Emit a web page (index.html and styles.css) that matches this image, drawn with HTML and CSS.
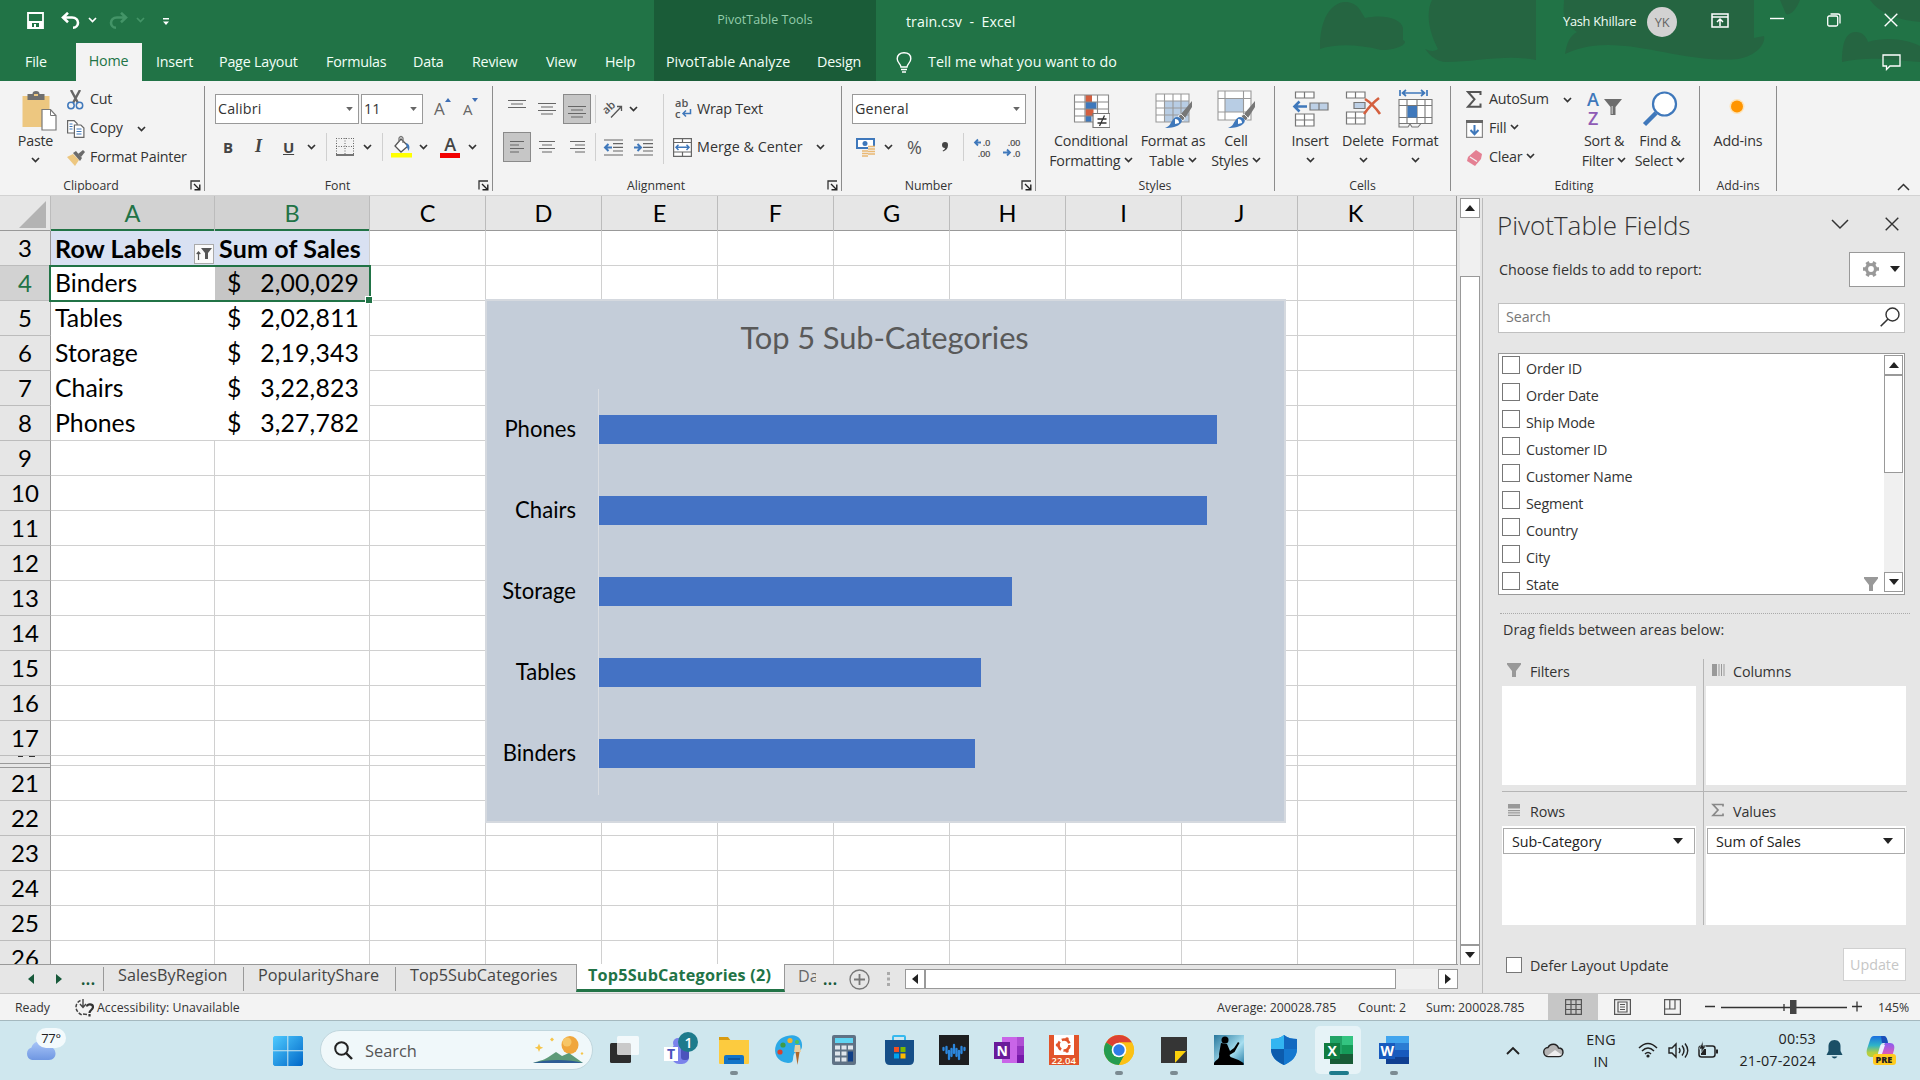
FILE: index.html
```html
<!DOCTYPE html>
<html lang="en">
<head>
<meta charset="utf-8">
<title>train.csv - Excel</title>
<link rel="stylesheet" href="styles.css">
</head>
<body>
<svg class="defs" aria-hidden="true">
  <symbol id="chev" viewBox="0 0 9 6"><path d="M1 1l3.5 3.5L8 1" fill="none" stroke="currentColor" stroke-width="1.7"/></symbol>
  <symbol id="tri" viewBox="0 0 10 6"><path d="M0 0h10L5 6z" fill="currentColor"/></symbol>
  <symbol id="launch" viewBox="0 0 11 11"><path d="M1 9.500V1h9" fill="none" stroke="#333" stroke-width="1.300"/><path d="M4 4l5.500 5.500M9.800 4.500v5.300H4.500" fill="none" stroke="#222" stroke-width="1.400"/></symbol>
  <symbol id="funnel" viewBox="0 0 14 14"><path d="M0 0h14v1.500L9 8v6H5V8L0 1.500z" fill="currentColor"/></symbol>
</svg>

<header class="titlebar">
  <svg class="art" viewBox="0 0 640 81"><g fill="#256541">
    <path d="M40 47C40 20 50 3 65 2c13 0 16 10 20 16 18-4 36 0 38 10v12c6 2-2 10-22 10-25-6-45-6-61-1z"/>
    <path d="M152 0h104v60c-30-6-60 2-90 2-8 0-15-5-21-13 6 3 11 2 13 0C148 30 146 12 152 0z"/>
    <path d="M284 0h190v38l10-2c2 8-8 20-26 23-45 4-90-14-130-14-20 0-32 4-43 9 2-12 5-18 12-22C280 20 284 10 284 0z"/>
    <path d="M562 62c0-20 4-30 14-30 6 0 10 4 12 10 20-6 40-2 52 4v16c-30-2-50-6-78 0zM500 0h20c-4 10-10 16-14 14zM590 0h50v22c-22-2-40-8-50-22z"/></g></svg>
  <div class="quick">
    <svg width="17" height="17" viewBox="0 0 17 17"><path d="M1 1h15v15H1z" fill="none" stroke="#fff" stroke-width="1.800"/><path d="M1 9h15v7H1z" fill="#fff"/><path d="M5 11h7v4H9v-3H7v3H5z" fill="#217346"/></svg>
    <svg width="19" height="17" viewBox="0 0 19 17"><path d="M7 .8L2 5.500l5 4.700M2.500 5.500H11c4 0 6 2.500 6 5.200s-2 5-5 5" fill="none" stroke="#fff" stroke-width="2.600"/></svg>
    <svg class="chev white" width="9" height="6"><use href="#chev"/></svg>
    <svg width="19" height="17" viewBox="0 0 19 17"><path d="M12 .8l5 4.700-5 4.700M16.500 5.500H8c-4 0-6 2.500-6 5.200s2 5 5 5" fill="none" stroke="#439467" stroke-width="2.600"/></svg>
    <svg class="chev dimgreen" width="9" height="6"><use href="#chev"/></svg>
    <svg class="custom" width="7" height="8" viewBox="0 0 7 8"><path d="M0 0h6v1.400H0zM0 3.500h6L3 7z" fill="#fff"/></svg>
    <span class="tools">PivotTable Tools</span>
    <span class="doc">train.csv&nbsp; -&nbsp; Excel</span>
    <span class="user">Yash Khillare</span>
    <span class="avatar">YK</span>
    <svg width="18" height="15" viewBox="0 0 18 15"><path d="M1 1h16v13H1zM1 4h16M9 13V6.500M6 9l3-3 3 3" fill="none" stroke="#fff" stroke-width="1.500"/></svg>
    <svg class="min" width="14" height="4" viewBox="0 0 14 4"><path d="M0 1.500h14" stroke="#fff" stroke-width="1.400"/></svg>
    <svg width="14" height="14" viewBox="0 0 14 14"><rect x=".7" y="3" width="10" height="10" rx="1.500" fill="none" stroke="#fff" stroke-width="1.300"/><path d="M3.500 1H11q2 0 2 2v7.500" fill="none" stroke="#fff" stroke-width="1.300"/></svg>
    <svg width="14" height="14" viewBox="0 0 14 14"><path d="M.7.7l12.600 12.600M13.300.7L.7 13.300" stroke="#fff" stroke-width="1.400"/></svg>
  </div>
  <nav class="tabs">
    <span>File</span><span class="home">Home</span><span>Insert</span><span>Page Layout</span><span>Formulas</span><span>Data</span><span>Review</span><span>View</span><span>Help</span><span class="ctx">PivotTable Analyze</span><span>Design</span>
    <svg width="16" height="21" viewBox="0 0 16 21"><path d="M5 15c0-3-3.800-4-3.800-8.200C1.200 3 4 .8 8 .8s6.800 2.200 6.800 6C14.800 11 11 12 11 15zM5 17.500h6M6 20h4" fill="none" stroke="#fff" stroke-width="1.400"/></svg>
    <span class="tell">Tell me what you want to do</span>
    <svg width="19" height="17" viewBox="0 0 19 17"><path d="M1 1h17v11H8l-3.500 3.500V12H1z" fill="none" stroke="#fff" stroke-width="1.300"/></svg>
  </nav>
</header>

<section class="ribbon">
  <div class="group g-clip">
    <div class="gbody split">
      <div class="big paste"><svg width="36" height="42" viewBox="-1.500 0 36 42"><path d="M0 7h27v31H0z" fill="#edc780"/><path d="M5 11V5h5q0-3 3.500-3T17 5h5v6z" fill="#6f6f6f"/><path d="M11.500 5h4v2h-4z" fill="#edc780"/><path d="M19.500 20.500h8.500l5.500 6V41h-14z" fill="#fff" stroke="#777" stroke-width="1.200"/><path d="M28 20.500v6h5.500" fill="none" stroke="#777"/></svg><span>Paste</span><svg class="chev" width="9" height="6"><use href="#chev"/></svg></div>
      <div class="small-col">
        <div class="sm"><svg width="17" height="20" viewBox="0 0 17 20"><path d="M4 0l7 13M13 0L6 13" stroke="#666" stroke-width="2.400"/><circle cx="4" cy="15.500" r="3.200" fill="none" stroke="#3f78bb" stroke-width="1.500"/><circle cx="12.500" cy="15.500" r="3.200" fill="none" stroke="#3f78bb" stroke-width="1.500"/></svg><span>Cut</span></div>
        <div class="sm copy"><svg width="18" height="18" viewBox="0 0 18 18"><g fill="#fff" stroke="#666" stroke-width="1.200"><path d="M.6.6h6.500l3 3V13H.6z"/><path d="M7.400 5h6.500l3 3v9.400H7.400z"/></g><path d="M2.500 4h3M2.500 6.500h3M2.500 9h3M9.500 9h5M9.500 11.500h5M9.500 14h5" stroke="#3f78bb" stroke-width="1.200"/></svg><span>Copy</span><svg class="chev" width="9" height="6"><use href="#chev"/></svg></div>
        <div class="sm"><svg width="19" height="16" viewBox="0 0 19 16"><path d="M0 7l6-3 6 6-4 6z" fill="#edc780"/><path d="M6 3l3-2 6 7-2 3z" fill="#6b6b6b"/><path d="M11 4l5-4 2 2-4 5z" fill="#6b6b6b"/></svg><span>Format Painter</span></div>
      </div>
    </div>
    <div class="glabel"><span>Clipboard</span><svg width="11" height="11"><use href="#launch"/></svg></div>
  </div>

  <div class="group g-font">
    <div class="gbody rows">
      <div class="r1"><div class="combo w145"><span>Calibri</span><svg class="tri" width="7" height="4"><use href="#tri"/></svg></div><div class="combo w63"><span>11</span><svg class="tri" width="7" height="4"><use href="#tri"/></svg></div>
        <div class="grow"><span>A</span><svg width="6" height="4" viewBox="0 0 6 4"><path d="M0 4l3-4 3 4z" fill="#3f6fb5"/></svg></div>
        <div class="grow"><span class="less">A</span><svg width="6" height="4" viewBox="0 0 6 4"><path d="M0 0l3 4 3-4z" fill="#3f6fb5"/></svg></div></div>
      <div class="r2"><b>B</b><i>I</i><u>U</u><svg class="chev" width="9" height="6"><use href="#chev"/></svg><em class="sep"></em>
        <svg width="18" height="18" viewBox="0 0 18 18"><path d="M.5 0v17M17.500 0v17M0 .5h18M9 0v17M0 8.500h18" stroke="#666" stroke-dasharray="1 1.500"/><path d="M0 17h18" stroke="#555" stroke-width="1.600"/></svg>
        <svg class="chev" width="9" height="6"><use href="#chev"/></svg><em class="sep"></em>
        <svg width="21" height="22" viewBox="0 0 21 22"><path d="M10 3l7 7-7 6-6-6z" fill="#fff" stroke="#555" stroke-width="1.300"/><path d="M8 6V2q2-3 4 0v5" fill="none" stroke="#777" stroke-width="1.300"/><path d="M15 7c4 1 4 5 2.500 8-1-3-2-4-2.500-8z" fill="#3f78bb"/><path d="M0 17h21v4.500H0z" fill="#ff0"/></svg>
        <svg class="chev" width="9" height="6"><use href="#chev"/></svg>
        <span class="fontcolor">A</span>
        <svg class="chev" width="9" height="6"><use href="#chev"/></svg></div>
    </div>
    <div class="glabel"><span>Font</span><svg width="11" height="11"><use href="#launch"/></svg></div>
  </div>

  <div class="group g-align">
    <div class="gbody rows">
      <div class="r1"><svg class="topal" width="18" height="12" viewBox="0 0 18 12"><path d="M0 .5h18M3 4h12M0 7.500h18" class="ln"/></svg>
        <svg width="18" height="12" viewBox="0 0 18 12"><path d="M0 .5h18M3 4h12M0 7.500h18M3 11h12" class="ln"/></svg>
        <span class="sel"><svg width="18" height="20" viewBox="0 0 18 20"><path d="M0 7.500h18M3 11h12M0 14.500h18M3 18h12" class="ln"/></svg></span>
        <em class="sep"></em>
        <svg width="19" height="18" viewBox="0 0 19 18"><text x="0" y="11" transform="rotate(-42 6 10)" class="ab">ab</text><path d="M7 17.500L17 7M17.500 11V6.500H13" fill="none" stroke="#555" stroke-width="1.300"/></svg>
        <svg class="chev" width="9" height="6"><use href="#chev"/></svg><em class="sep tall"></em>
        <svg width="17" height="20" viewBox="0 0 17 20"><text x="0" y="8" class="ab">ab</text><text x="0" y="18.500" class="ab">c</text><path d="M15.500 10v4.500H8.500M11 11.500l-3 3 3 3" fill="none" stroke="#3f78bb" stroke-width="1.500"/></svg>
        <span>Wrap Text</span></div>
      <div class="r2"><span class="sel"><svg width="14" height="12" viewBox="0 0 14 12"><path d="M0 .5h14M0 4h9M0 7.500h14M0 11h9" class="ln"/></svg></span>
        <svg width="16" height="12" viewBox="0 0 16 12"><path d="M0 .5h16M3 4h10M0 7.500h16M3 11h10" class="ln"/></svg>
        <svg width="15" height="12" viewBox="0 0 15 12"><path d="M0 .5h15M5 4h10M0 7.500h15M5 11h10" class="ln"/></svg>
        <em class="sep"></em>
        <svg width="19" height="17" viewBox="0 0 19 17"><path d="M0 1h19M9 4.700h10M9 8.400h10M9 12h10M0 16h19" class="ln"/><path d="M8 8.500H1.500M4.500 5L1 8.500 4.500 12" fill="none" stroke="#3f78bb" stroke-width="2"/></svg>
        <svg width="19" height="17" viewBox="0 0 19 17"><path d="M0 1h19M9 4.700h10M9 8.400h10M9 12h10M0 16h19" class="ln"/><path d="M0 8.500h6.500M3.500 5L7 8.500 3.500 12" fill="none" stroke="#3f78bb" stroke-width="2"/></svg>
        <em></em>
        <svg width="19" height="19" viewBox="0 0 19 19"><path d="M.6.6h17.800v17.800H.6zM0 4.500h19M0 14h19M9.500 0v4.500M9.500 14v5" fill="#fff" stroke="#666" stroke-width="1.200"/><path d="M3 9.300h13M5.500 6.700L3 9.300l2.500 2.600M13.500 6.700L16 9.300l-2.500 2.600" fill="none" stroke="#3f78bb" stroke-width="1.500"/></svg>
        <span class="merge">Merge &amp; Center</span><svg class="chev" width="9" height="6"><use href="#chev"/></svg></div>
    </div>
    <div class="glabel"><span>Alignment</span><svg width="11" height="11"><use href="#launch"/></svg></div>
  </div>

  <div class="group g-num">
    <div class="gbody rows">
      <div class="r1"><div class="combo w175"><span>General</span><svg class="tri" width="7" height="4"><use href="#tri"/></svg></div></div>
      <div class="r2"><svg width="20" height="19" viewBox="0 0 20 19"><path d="M0 0h19v11H0z" fill="#3f78bb"/><path d="M2 2h15v7H2z" fill="#fff"/><path d="M1 1h17v9H1z" fill="none" stroke="#3f78bb" stroke-width="2"/><circle cx="9" cy="5.500" r="2.500" fill="#3f78bb"/><path d="M12 8h7v9h-7z" fill="#f3f3f3"/><path d="M12 8.500h7M12 11h7M12 13.500h7M12 16h7M6 13h6M6 15.500h6M6 18h6" stroke="#e9b873" stroke-width="1.700"/></svg>
        <svg class="chev" width="9" height="6"><use href="#chev"/></svg><span class="pct">%</span>
        <svg width="8" height="10" viewBox="0 0 8 10"><path d="M4 0a3 3 0 013 3.200C7 6.500 5 8.500 2 9.500L1.700 8.500C3.500 7.700 4 6.800 4 6A3 3 0 014 0z" fill="#444"/></svg>
        <em class="sep"></em>
        <svg width="18" height="21" viewBox="0 -1 18 21"><text x="16" y="8" class="dec" text-anchor="end">.0</text><text x="16" y="18.500" class="dec" text-anchor="end">.00</text><path d="M7 4.500H1.200M4 1.500l-3 3 3 3" fill="none" stroke="#3f78bb" stroke-width="1.800"/></svg>
        <svg width="18" height="21" viewBox="0 -1 18 21"><text x="17" y="8" class="dec" text-anchor="end">.00</text><text x="17" y="18.500" class="dec" text-anchor="end">.0</text><path d="M0 14.500h6.500M4 11.500l3 3-3 3" fill="none" stroke="#3f78bb" stroke-width="1.800"/></svg></div>
    </div>
    <div class="glabel"><span>Number</span><svg width="11" height="11"><use href="#launch"/></svg></div>
  </div>

  <div class="group g-styles">
    <div class="gbody bigs">
      <div class="big"><svg width="38" height="42" viewBox="-1.500 0 38 42"><path d="M1 6h34v27H1z" fill="#fff"/><path d="M12 6h6.500v7H12zM12 20h8v7h-8z" fill="#d35f40"/><path d="M12 13h11v7H12zM12 27h6v6h-6z" fill="#3f78bb"/><path d="M1 6h34v27H1zM1 13h34M1 20h34M1 27h34M11.500 6v27M24 6v27" fill="none" stroke="#888" stroke-width="1.100"/><path d="M19.500 24.500h17v14h-17z" fill="#fff" stroke="#777" stroke-width="1.200"/><path d="M24 30h9M24 34h9M31 26.500l-5 10.500" stroke="#333" stroke-width="1.300"/></svg><span>Conditional</span><span>Formatting <svg class="chev" width="9" height="6"><use href="#chev"/></svg></span></div>
      <div class="big"><svg width="38" height="42" viewBox="-1 0 38 42"><path d="M1 5h33v28H1z" fill="#fff"/><path d="M9.500 12H34v21H9.500z" fill="#b8cde4"/><path d="M1 5h33v28H1zM1 12h33M1 19h33M1 26h33M9.500 5v28M18 5v28M26 5v28" fill="none" stroke="#999" stroke-width="1.100"/><path d="M37 12v6l-7 11-4-4z" fill="#777"/><path d="M26 25l4 4-2 3-5-5z" fill="#777" stroke="#fff" stroke-width=".8"/><path d="M22 28c4 0 6 3 4 6-3 4-10 5-16 5 5-2 5-4 7-7 1-2 3-4 5-4z" fill="#3f78bb"/><path d="M20 30q4 0 4 4l-4 1z" fill="#fff"/></svg><span>Format as</span><span>Table <svg class="chev" width="9" height="6"><use href="#chev"/></svg></span></div>
      <div class="big"><svg width="38" height="42" viewBox="0 0 38 42"><path d="M1 2h33v29H1z" fill="#fff"/><path d="M8 9.500h18.500V23H8z" fill="#b8cde4"/><path d="M1 2h33v29H1zM1 9.500h33M1 23h33M8 2v29M26.500 2v29" fill="none" stroke="#999" stroke-width="1.100"/><path d="M38 12v6l-7 11-4-4z" fill="#777"/><path d="M27 25l4 4-2 3-5-5z" fill="#777" stroke="#fff" stroke-width=".8"/><path d="M23 28c4 0 6 3 4 6-3 4-10 5-16 5 5-2 5-4 7-7 1-2 3-4 5-4z" fill="#3f78bb"/><path d="M21 30q4 0 4 4l-4 1z" fill="#fff"/></svg><span>Cell</span><span>Styles <svg class="chev" width="9" height="6"><use href="#chev"/></svg></span></div>
    </div>
    <div class="glabel"><span>Styles</span></div>
  </div>

  <div class="group g-cells">
    <div class="gbody bigs">
      <div class="big"><svg width="37" height="42" viewBox="0 0 37 42"><g fill="#fff" stroke="#777" stroke-width="1.200"><path d="M3.500 3H22v6H3.500zM12.500 3v6M3.500 25H22v12H3.500zM3.500 31H22M12.500 25v12"/></g><path d="M18 14h18v7H18zM27 14v7" fill="#bdd0e6" stroke="#777" stroke-width="1.200"/><path d="M15 17.500H3M7.500 12.500l-5 5 5 5" fill="none" stroke="#3f78bb" stroke-width="2.600"/></svg><span>Insert</span><svg class="chev" width="9" height="6"><use href="#chev"/></svg></div>
      <div class="big"><svg width="37" height="42" viewBox="0 0 37 42"><g fill="#fff" stroke="#777" stroke-width="1.200"><path d="M1.500 3H20v6H1.500zM10.500 3v6M1.500 23H20v12H1.500zM1.500 29H20M10.500 23v12"/></g><path d="M9 13.500h11v6H9z" fill="#bdd0e6" stroke="#777" stroke-width="1.200"/><path d="M20 10q8 5 15 15M34 9q-8 6-15 16" fill="none" stroke="#d4603f" stroke-width="2.600"/></svg><span>Delete</span><svg class="chev" width="9" height="6"><use href="#chev"/></svg></div>
      <div class="big"><svg width="37" height="42" viewBox="0 0 37 42"><path d="M3 1v6M30 1v6M5 4h23M9 1L5.500 4 9 7M24 1l3.500 3L24 7" fill="none" stroke="#3f78bb" stroke-width="1.700"/><path d="M2 10.500h33v24H2z" fill="#fff"/><path d="M2 10.500h33v24H2zM2 16.500h33M2 28.500h33M10 10.500v24M20 10.500v24M28 10.500v24M2 34.500v3.500h9l2-3 2 3h6l3-3.500" fill="none" stroke="#777" stroke-width="1.100"/><path d="M10.500 17H20v11.500h-9.500z" fill="#3f78bb"/></svg><span>Format</span><svg class="chev" width="9" height="6"><use href="#chev"/></svg></div>
    </div>
    <div class="glabel"><span>Cells</span></div>
  </div>

  <div class="group g-edit">
    <div class="gbody bigs">
      <div class="small-col">
        <div class="sm sum"><svg width="16" height="17" viewBox="0 0 16 17"><path d="M14.500 4V1H2l6.500 7.300L2 15.800h12.500v-3.300" fill="none" stroke="#555" stroke-width="2"/></svg><span>AutoSum</span><svg class="chev" width="9" height="6"><use href="#chev"/></svg></div>
        <div class="sm"><svg width="17" height="18" viewBox="0 0 17 18"><path d="M.6.6h15.800v16.800H.6z" fill="#fff" stroke="#888" stroke-width="1.200"/><path d="M0 0h17v3H0z" fill="#666"/><path d="M8.500 5v9M4.500 10l4 4.200 4-4.200" fill="none" stroke="#3f78bb" stroke-width="2"/></svg><span>Fill <svg class="chev" width="9" height="6"><use href="#chev"/></svg></span></div>
        <div class="sm"><svg width="17" height="16" viewBox="0 0 17 16"><path d="M10 0l6 4-1 5-6 7-8-5 1-4z" fill="#e48093"/><path d="M4 7l7 4.500" stroke="#f3f3f3" stroke-width="1.300"/></svg><span>Clear <svg class="chev" width="9" height="6"><use href="#chev"/></svg></span></div>
      </div>
      <div class="big"><svg class="sort" width="36" height="42" viewBox="-1 0 36 42"><text x="0" y="16.500" class="az a">A</text><text x="1" y="36" class="az z">Z</text><path d="M17 10h18l-6.500 8v8h-5v-8z" fill="#6d6d6d"/><path d="M25.200 17v8" stroke="#bbb" stroke-width="1.400"/></svg><span>Sort &amp;</span><span>Filter <svg class="chev" width="9" height="6"><use href="#chev"/></svg></span></div>
      <div class="big"><svg width="36" height="42" viewBox="0 0 36 42"><circle cx="22.500" cy="15" r="11.500" fill="#fff" stroke="#3f78bb" stroke-width="2.200"/><path d="M14 24L2.500 35.500" stroke="#3f78bb" stroke-width="4.500"/></svg><span>Find &amp;</span><span>Select <svg class="chev" width="9" height="6"><use href="#chev"/></svg></span></div>
    </div>
    <div class="glabel"><span>Editing</span></div>
  </div>

  <div class="group g-add">
    <div class="gbody bigs"><div class="big"><svg width="36" height="42" viewBox="0 0 36 42"><circle cx="17" cy="17.500" r="7.500" fill="#fde3b8"/><circle cx="17" cy="17.500" r="6" fill="#ff9500"/></svg><span>Add-ins</span></div></div>
    <div class="glabel"><span>Add-ins</span></div>
  </div>
  <div class="fold"><svg width="13" height="8" viewBox="0 0 13 8"><path d="M1 7l5.500-5.500L12 7" fill="none" stroke="#333" stroke-width="1.500"/></svg></div>
</section>

<main class="work">
  <div class="book">
    <div class="view">
      <div class="sheet">
        <div class="cols"><span class="corner"><svg width="28" height="28" viewBox="0 0 28 28"><path d="M27 0v27H0z" fill="#b3b3b3"/></svg></span><span class="on">A</span><span class="on">B</span><span>C</span><span>D</span><span>E</span><span>F</span><span>G</span><span>H</span><span>I</span><span>J</span><span>K</span><span></span></div>
        <div class="cells">
          <div class="row head"><b>3</b><span>Row Labels<i class="filter"><svg width="16" height="14" viewBox="0 0 16 14"><path d="M2.500 13V5M.7 7l1.800-2 1.800 2" fill="none" stroke="#555" stroke-width="1.200"/><path d="M5 1h11l-4 5v6H9V6z" fill="#555"/></svg></i></span><span>Sum of Sales</span></div>
          <div class="row on"><b>4</b><span>Binders</span><span class="num"><s>$</s>2,00,029</span></div>
          <div class="row"><b>5</b><span>Tables</span><span class="num"><s>$</s>2,02,811</span></div>
          <div class="row"><b>6</b><span>Storage</span><span class="num"><s>$</s>2,19,343</span></div>
          <div class="row"><b>7</b><span>Chairs</span><span class="num"><s>$</s>3,22,823</span></div>
          <div class="row last"><b>8</b><span>Phones</span><span class="num"><s>$</s>3,27,782</span></div>
          <div class="row"><b>9</b></div><div class="row"><b>10</b></div><div class="row"><b>11</b></div><div class="row"><b>12</b></div><div class="row"><b>13</b></div><div class="row"><b>14</b></div><div class="row"><b>15</b></div><div class="row"><b>16</b></div><div class="row"><b>17</b></div>
          <div class="row sliver"><b><i></i></b></div>
          <div class="row"><b>21</b></div><div class="row"><b>22</b></div><div class="row"><b>23</b></div><div class="row"><b>24</b></div><div class="row"><b>25</b></div><div class="row"><b>26</b></div>
          <div class="selection"><i></i></div>
          <figure class="chart">
            <figcaption>Top 5 Sub-Categories</figcaption>
            <div class="plot">
              <span>Phones</span><div><i style="width:618px"></i></div>
              <span>Chairs</span><div><i style="width:608px"></i></div>
              <span>Storage</span><div><i style="width:413px"></i></div>
              <span>Tables</span><div><i style="width:382px"></i></div>
              <span>Binders</span><div><i style="width:376px"></i></div>
            </div>
          </figure>
        </div>
      </div>
      <div class="vscroll"><span class="btn"><svg class="up" width="10" height="6"><use href="#tri"/></svg></span><span class="track"></span><span class="thumb"></span><span class="btn"><svg width="10" height="6"><use href="#tri"/></svg></span></div>
    </div>
    <div class="sheets">
      <svg width="6" height="10" viewBox="0 0 6 10"><path d="M6 0v10L0 5z" fill="#17593a"/></svg>
      <svg width="6" height="10" viewBox="0 0 6 10"><path d="M0 0v10l6-5z" fill="#17593a"/></svg>
      <span class="dots">...</span>
      <span class="st">SalesByRegion</span><span class="st">PopularityShare</span><span class="st">Top5SubCategories</span><span class="st active">Top5SubCategories (2)</span><span class="cut">Da</span><span class="dots">...</span>
      <svg width="21" height="21" viewBox="0 0 21 21"><circle cx="10.500" cy="10.500" r="9.500" fill="none" stroke="#777" stroke-width="1.300"/><path d="M10.500 5v11M5 10.500h11" stroke="#777" stroke-width="1.800"/></svg>
      <svg width="3" height="14" viewBox="0 0 3 14"><path d="M0 0h3v3H0zM0 5.500h3v3H0zM0 11h3v3H0z" fill="#aaa"/></svg>
      <div class="hscroll"><span class="btn"><svg width="6" height="10" viewBox="0 0 6 10"><path d="M6 0v10L0 5z" fill="#222"/></svg></span><span class="thumb"></span><span class="track"></span><span class="btn"><svg width="6" height="10" viewBox="0 0 6 10"><path d="M0 0v10l6-5z" fill="#222"/></svg></span></div>
    </div>
  </div>

  <aside class="pane">
    <div class="ptitle"><h2>PivotTable Fields</h2><svg width="18" height="11" viewBox="0 0 18 11"><path d="M1 1l8 8 8-8" fill="none" stroke="#333" stroke-width="1.500"/></svg><svg width="14" height="14" viewBox="0 0 14 14"><path d="M.7.7l12.600 12.600M13.300.7L.7 13.300" stroke="#333" stroke-width="1.400"/></svg></div>
    <div class="choose"><span>Choose fields to add to report:</span><div class="gear"><svg width="16" height="16" viewBox="0 0 16 16"><circle cx="8" cy="8" r="4.500" fill="none" stroke="#999" stroke-width="3.200"/><path d="M4 1l1.500 2.600M12 1l-1.500 2.600M4 15l1.500-2.600M12 15l-1.500-2.600M0 8h3M13 8h3" stroke="#999" stroke-width="3.600"/></svg><svg width="10" height="6"><use href="#tri"/></svg></div></div>
    <div class="search"><span>Search</span><svg width="20" height="20" viewBox="0 0 20 20"><circle cx="12.500" cy="7.500" r="6.500" fill="none" stroke="#333" stroke-width="1.400"/><path d="M8 12L.7 19.300" stroke="#333" stroke-width="1.600"/></svg></div>
    <div class="list">
      <ul><li>Order ID</li><li>Order Date</li><li>Ship Mode</li><li>Customer ID</li><li>Customer Name</li><li>Segment</li><li>Country</li><li>City</li><li>State<svg width="14" height="14"><use href="#funnel"/></svg></li></ul>
      <div class="lscroll"><span class="btn"><svg class="up" width="10" height="6"><use href="#tri"/></svg></span><span class="thumb"></span><span class="track"></span><span class="btn"><svg width="10" height="6"><use href="#tri"/></svg></span></div>
    </div>
    <p class="drag">Drag fields between areas below:</p>
    <div class="areas">
      <section><h3><svg width="14" height="14"><use href="#funnel"/></svg>Filters</h3><div class="drop"></div></section>
      <section><h3><svg width="14" height="12" viewBox="0 0 14 12"><path d="M1 0h5v12H1zM7.500 0h1v12h-1zM10 0h1v12h-1zM12.500 0h1v12h-1z" fill="#999"/></svg>Columns</h3><div class="drop"></div></section>
      <section><h3><svg width="14" height="12" viewBox="0 0 14 12"><path d="M1 0h12v4.500H1zM1 6h12v1.200H1zM1 8.300h12v1.200H1zM1 10.700h12v1.200H1z" fill="#999"/></svg>Rows</h3><div class="drop"><div class="field">Sub-Category<svg width="10" height="6"><use href="#tri"/></svg></div></div></section>
      <section><h3><svg width="14" height="14" viewBox="0 0 14 14"><path d="M12 3.500V1.500H2L7 7l-5 5.500h10v-2" fill="none" stroke="#888" stroke-width="1.700"/></svg>Values</h3><div class="drop"><div class="field">Sum of Sales<svg width="10" height="6"><use href="#tri"/></svg></div></div></section>
    </div>
    <div class="defer"><i></i><span>Defer Layout Update</span><button>Update</button></div>
  </aside>
</main>

<div class="status">
  <span>Ready</span>
  <svg width="19" height="19" viewBox="0 0 19 19"><path d="M5.500 2.500A7 7 0 001 9c0 3.500 2.500 6.500 6 8" fill="none" stroke="#444" stroke-width="1.500" stroke-dasharray="3.500 1.500"/><path d="M8 1v8M5 6l3 3.500L11 6M8 16l4 .5" fill="none" stroke="#444" stroke-width="1.400"/><path d="M12 8.500c0-3 6-3 6 .5 0 3-3.500 3-3.500 6M14.500 16v2.500" fill="none" stroke="#333" stroke-width="2.200"/></svg>
  <span class="acc">Accessibility: Unavailable</span><span>Average: 200028.785</span><span>Count: 2</span><span>Sum: 200028.785</span>
  <span class="vsel"><svg width="17" height="16" viewBox="0 0 17 16"><path d="M.6.6h15.800v14.800H.6zM.6 5.500h15.800M.6 10.500h15.800M6 .6v15M11 .6v15" fill="none" stroke="#555" stroke-width="1.200"/></svg></span>
  <svg width="17" height="16" viewBox="0 0 17 16"><path d="M.6.6h15.800v14.800H.6zM4 3h9v10H4zM6 5.500h5M6 8h5M6 10.500h5" fill="none" stroke="#555" stroke-width="1.200"/></svg>
  <svg width="17" height="16" viewBox="0 0 17 16"><path d="M.6.6h15.800v14.800H.6zM.6 10h10.400V.6M5.800.6V10" fill="none" stroke="#555" stroke-width="1.200"/></svg>
  <svg width="158" height="16" viewBox="0 0 158 16"><path d="M0 7.500h10M16 8.500h126M147 7.500h10M152 2.500v10M79 5v7" stroke="#333" stroke-width="1.300"/><path d="M85 1h6.500v14H85z" fill="#444"/></svg>
  <span class="zoom">145%</span>
</div>

<footer class="taskbar">
  <div class="weather"><svg width="32" height="24" viewBox="0 0 32 24"><defs><linearGradient id="cl" x2="0" y2="1"><stop stop-color="#a9c6f8"/><stop offset="1" stop-color="#6f97e2"/></linearGradient></defs><path d="M7 22a6.500 6.500 0 01-.5-12.500C8 3 18 0 22 8c11 0 11 14 2 14z" fill="url(#cl)"/></svg><span>77°</span></div>
  <svg class="win" width="30" height="30" viewBox="0 0 30 30"><defs><linearGradient id="wn" x2="1" y2="1"><stop stop-color="#4fcbff"/><stop offset="1" stop-color="#0067c8"/></linearGradient></defs><path d="M1.500 0H14.300v14.300H0V1.500zM15.300 0h13.200L30 1.500v12.800H15.300zM0 15.300h14.300V30H1.500L0 28.500zM15.300 15.300H30v13.200L28.500 30H15.300z" fill="url(#wn)"/></svg>
  <div class="tsearch"><svg width="19" height="19" viewBox="0 0 19 19"><circle cx="7.500" cy="7.500" r="6.300" fill="none" stroke="#222" stroke-width="2"/><path d="M12 12l6 6" stroke="#222" stroke-width="2.400"/></svg><span>Search</span>
    <svg width="52" height="30" viewBox="0 0 52 30"><ellipse cx="37" cy="10" rx="8.500" ry="9" fill="#f0a63c"/><circle cx="34" cy="7" r="4.500" fill="#f7c667"/><path d="M0 28c8-3 12-3 17-7l6-4 6 4 7-3 14 10z" fill="#5d9a78"/><path d="M0 28c14-4 36-4 50 0z" fill="#2d5c95"/><path d="M6 8.500l1.200 3 3 1.200-3 1.200L6 17l-1.200-3.100-3-1.200 3-1.200zM19 2.500l2 2-2 2-2-2zM49 17l1.500 1.500L49 20l-1.500-1.500z" fill="#f6c54a"/></svg></div>
  <div class="apps">
    <span><svg width="34" height="34" viewBox="0 0 34 34"><rect x="3" y="10" width="21" height="20" rx="1.500" fill="#2d2d2d"/><rect x="10" y="3" width="22" height="19" rx="1.500" fill="#fff" opacity=".75"/></svg></span>
    <span><svg width="38" height="40" viewBox="0 0 38 40"><rect x="12" y="13" width="17" height="21" rx="7" fill="#7b83eb"/><circle cx="18" cy="13" r="5" fill="#7b83eb"/><rect x="21" y="16" width="8" height="14" rx="3" fill="#4b53bc"/><path d="M4 17h14v14H4z" fill="#fff"/><text x="7" y="29" class="tk" fill="#4b53bc">T</text><circle cx="28" cy="12" r="10" fill="#1e7b8c"/><text x="24.500" y="17.500" class="badge">1</text></svg></span>
    <span class="run"><svg width="34" height="34" viewBox="0 0 34 34"><path d="M2 4h9l3 4h-12z" fill="#d99b10"/><path d="M2 7h30v23q0 1-1 1H3q-1 0-1-1z" fill="#fccb3f"/><path d="M7 24q0-2 2-2h16q2 0 2 2v7H7z" fill="#1274c8"/><path d="M11 26h12" stroke="#0b4f94" stroke-width="1.500"/></svg></span>
    <span><svg width="34" height="34" viewBox="0 0 34 34"><path d="M15 3C25 0 31 6 30 14c-1 6-6 3-8 7s1 9-6 9C5 29 1 20 4 12c2-5 6-8 11-9z" fill="#2ca9e6"/><circle cx="11" cy="12" r="2.600" fill="#3d9b46"/><circle cx="18" cy="7.500" r="2.600" fill="#f4b32c"/><circle cx="8" cy="19" r="2.600" fill="#d8412f"/><circle cx="25" cy="9" r="2" fill="#56c052"/><path d="M23 12h5l1 7h-7z" fill="#e9cfa2"/><path d="M23.500 19h4l-2 13z" fill="#b0682a"/></svg></span>
    <span><svg width="34" height="34" viewBox="0 0 34 34"><rect x="5" y="2" width="24" height="30" rx="2" fill="#5f7285"/><path d="M8 5h18v5H8z" fill="#5fd5f3"/><path d="M8 12.500h5v4H8zM14.500 12.500h5v4h-5zM21 12.500h5v4h-5zM8 18.500h5v4H8zM14.500 18.500h5v4h-5zM8 24.500h5v4H8zM14.500 24.500h5v4h-5z" fill="#dfe6ec"/><path d="M21 18.500h5v10h-5z" fill="#0f3f86"/></svg></span>
    <span><svg width="34" height="34" viewBox="0 0 34 34"><path d="M11 7V4q0-1 1-1h10q1 0 1 1v3" fill="none" stroke="#35b9ee" stroke-width="2"/><path d="M3 7h29v20q0 5-5 5H8q-5 0-5-5z" fill="#164f88"/><path d="M12 14h5v5h-5z" fill="#f25022"/><path d="M18.500 14h5v5h-5z" fill="#7fba00"/><path d="M12 20.500h5v5h-5z" fill="#00a4ef"/><path d="M18.500 20.500h5v5h-5z" fill="#ffb900"/></svg></span>
    <span><svg width="34" height="34" viewBox="0 0 34 34"><path d="M2 2h30v30H2z" fill="#1d1e20"/><path d="M6.500 15v2M9.500 14v6M12 18v8M14.500 16v7M17 12v8M19.500 16v7M22 18v8M24.500 14v6M27.500 15v2" stroke="#2b86dc" stroke-width="2.300" stroke-linecap="round"/></svg></span>
    <span><svg width="34" height="34" viewBox="0 0 34 34"><path d="M10 4h22v26H10z" fill="#c965e8"/><path d="M25 4h7v9h-7z" fill="#b04fd4"/><path d="M25 13h7v9h-7z" fill="#9332bf"/><path d="M25 22h7v8h-7z" fill="#7719aa"/><path d="M2 9h16v17H2z" fill="#6a1b9a"/><text x="4.500" y="23" class="tk" fill="#fff">N</text></svg></span>
    <span><svg width="34" height="34" viewBox="0 0 34 34"><path d="M2 2h30v30H2z" fill="#e2542a"/><path d="M7 2h20v20H7z" fill="#fff"/><circle cx="17" cy="12" r="5.500" fill="none" stroke="#e2542a" stroke-width="2.600" stroke-dasharray="9 2.500"/><circle cx="10.500" cy="12" r="1.800" fill="#e2542a"/><circle cx="20" cy="6" r="1.800" fill="#e2542a"/><circle cx="20" cy="18" r="1.800" fill="#e2542a"/><text x="4.500" y="31" class="ub">22.04</text></svg></span>
    <span class="run"><svg width="34" height="34" viewBox="0 0 34 34"><circle cx="17" cy="17" r="15" fill="#fbc116"/><path d="M17 17L4 9.500A15 15 0 0130 9.500H17z" fill="#dd4132"/><path d="M4 9.500A15 15 0 0017 32l6-11-6-2z" fill="#249c50"/><path d="M4 9.500L10.500 21l6-4z" fill="#249c50"/><path d="M17 9.500h13A15 15 0 0117 32l6.500-11.500z" fill="#fbc116"/><circle cx="17" cy="17" r="7.300" fill="#fff"/><circle cx="17" cy="17" r="5.700" fill="#2f7ce8"/></svg></span>
    <span class="run"><svg width="34" height="34" viewBox="0 0 34 34"><path d="M4 4h26v13L18 30H4z" fill="#353535"/><path d="M18 30V18h12z" fill="#fbd00b"/><path d="M18 30L30 17v12q0 1-1 1z" fill="#333"/></svg></span>
    <span><svg width="34" height="34" viewBox="0 0 34 34"><defs><linearGradient id="kd" x2="1" y2="1"><stop stop-color="#28779c"/><stop offset=".6" stop-color="#a7dff0"/><stop offset="1" stop-color="#2a7ea6"/></linearGradient></defs><path d="M2 2h30v30H2z" fill="url(#kd)"/><circle cx="13" cy="7" r="3.500" fill="#000"/><path d="M9 10l6 1 3 7 4-3 4-6 1.500 1-5 9-5 3 1 2 8 3 5 3v2H2v-2c2-4 6-3 5-9z" fill="#000"/></svg></span>
    <span><svg width="34" height="34" viewBox="0 0 34 34"><path d="M17 2c4 3 8 4 13 4v10c0 8-6 13-13 16C10 29 4 24 4 16V6c5 0 9-1 13-4z" fill="#1787dd"/><path d="M17 2c4 3 8 4 13 4v10H17z" fill="#1269c0"/><path d="M17 16v16C10 29 4 24 4 16z" fill="#0c5cad"/><path d="M17 16h13c0 8-6 13-13 16z" fill="#1578cf"/><path d="M4 6c5 0 9-1 13-4v14H4z" fill="#32b5f1"/></svg></span>
    <span class="run current"><svg width="34" height="34" viewBox="0 0 34 34"><path d="M8 3h23v28H8z" fill="#21a366"/><path d="M20 3h11v9H20z" fill="#33c481"/><path d="M20 12h11v9H20z" fill="#159a58"/><path d="M8 21h23v10H8z" fill="#185c37"/><path d="M2 10h16v16H2z" fill="#107c41"/><text x="5.500" y="23" class="tk" fill="#fff">X</text></svg></span>
    <span class="run"><svg width="34" height="34" viewBox="0 0 34 34"><path d="M9 3h23v28H9z" fill="#2b7cd3"/><path d="M9 3h23v7H9z" fill="#41a5ee"/><path d="M9 17h23v7H9z" fill="#185abd"/><path d="M9 24h23v7H9z" fill="#103f91"/><path d="M2 10h16v16H2z" fill="#185abd"/><text x="3.500" y="23" class="tk" fill="#fff">W</text></svg></span>
  </div>
  <div class="tray">
    <svg width="14" height="9" viewBox="0 0 14 9"><path d="M1 8l6-6 6 6" fill="none" stroke="#222" stroke-width="1.900"/></svg>
    <svg width="21" height="15" viewBox="0 0 21 15"><path d="M5.500 13.500a4.500 4.500 0 01-.5-9C7 0 14 0 15.500 5c6 0 6 8.500 0 8.500z" fill="#b5b5b5" stroke="#222" stroke-width="1.400"/><path d="M4 13l8-6 7 5-3 1z" fill="#eee"/></svg>
    <span class="lang">ENG<br>IN</span>
    <svg width="20" height="16" viewBox="0 0 20 16"><path d="M1 6q9-9 18 0M4 9q6-6 12 0M7 12q3-3 6 0" fill="none" stroke="#222" stroke-width="1.500"/><circle cx="10" cy="14" r="1.600" fill="#222"/></svg>
    <svg width="21" height="17" viewBox="0 0 21 17"><path d="M1 6h3l4-4v13l-4-4H1zM11 6q2 2.500 0 5M14 3.500q4 5 0 10M17 1.500q5.500 7 0 14" fill="none" stroke="#222" stroke-width="1.400"/></svg>
    <svg width="21" height="18" viewBox="0 0 21 18"><rect x="1" y="5" width="16" height="11" rx="2.500" fill="none" stroke="#222" stroke-width="1.500"/><path d="M3 8h5v6H3zM18 8.500h2v4h-2z" fill="#222"/><path d="M5 0L1 8h3l-1 4 5-7H5z" fill="#222" stroke="#cfe7ee" stroke-width=".6"/></svg>
    <span class="clock">00:53<br>21-07-2024</span>
    <svg width="17" height="20" viewBox="0 0 17 20"><path d="M8.500 0c4 0 6 3 6 6v5l2 4H.5l2-4V6c0-3 2-6 6-6zM5.500 16.500h6q-3 4-6 0z" fill="#1b4f66"/></svg>
    <svg width="32" height="32" viewBox="0 0 32 32"><defs><linearGradient id="cp" x2="0" y2="1"><stop stop-color="#1b6fe0"/><stop offset=".45" stop-color="#2fb4c8"/><stop offset=".8" stop-color="#b8cf3d"/></linearGradient><linearGradient id="cq" x2="0" y2="1"><stop stop-color="#8b5cf0"/><stop offset=".6" stop-color="#d65bc0"/><stop offset="1" stop-color="#f0607a"/></linearGradient></defs><path d="M9 2h10q2 0 3 3l1 4h-5q-2 0-3 3l-3 11H6c-4 0-5-4-4-8l3-9q1-4 4-4z" fill="url(#cp)"/><path d="M16 2h3q2 0 3 3l1 4h-6z" fill="#1a4fb8"/><path d="M20 9h5c4 0 5 3 4 7l-3 10H12l3-6z" fill="url(#cq)"/><path d="M16 11h4l-3 9h-4z" fill="#eef"/><rect x="8" y="20" width="23" height="11" rx="3" fill="#ffcb1f"/><text x="10.500" y="29" class="pre">PRE</text></svg>
  </div>
</footer>
</body>
</html>
```
FILE: styles.css
```css
* { box-sizing: border-box; }
body { margin: 0; width: 1920px; height: 1080px; overflow: hidden; font-family: "Open Sans", "Noto Sans", sans-serif; font-size: 14.3px; letter-spacing: -0.22px; color: #333; display: flex; flex-direction: column; background: #e6e6e6; }
svg { display: block; flex: none; }
em, i, s { font-style: normal; text-decoration: none; }
.defs { width: 0; height: 0; position: absolute; }
.chev { color: #333; }
span .chev { display: inline-block; vertical-align: 3px; }
.white { color: #fff; }
.dimgreen { color: #439467; }
.up { transform: rotate(180deg); }

/* title bar */
.titlebar { height: 81px; flex: none; position: relative; color: #f2fff7; background: linear-gradient(90deg, #217346 654px, #1a5c38 654px, #1a5c38 876px, #217346 876px); }
.art { position: absolute; right: 0; top: 0; width: 640px; height: 81px; }
.quick, .tabs { position: relative; display: grid; align-items: center; white-space: nowrap; }
.quick { height: 43px; padding-left: 27px; grid-template-columns: 34px 27px 21px 27px 27px 491px 252px 657px 84px 64px 59px 57px 57px auto; font-size: 12.8px; letter-spacing: -0.3px; padding-bottom: 3px; }
.custom { margin-top: 4px; }
.min { margin-top: -3px; }
.tools { width: 222px; text-align: center; color: #94cdac; font-size: 12.5px; letter-spacing: 0.05px; margin-top: -2px; }
.doc { font-size: 14.2px; letter-spacing: 0.06px; padding-top: 2px; }
.user { padding-top: 2px; letter-spacing: -0.25px; }
.avatar { width: 30px; height: 30px; border-radius: 50%; background: #d2d2d2; color: #666; text-align: center; line-height: 30px; margin-top: 3px; }
.tabs { height: 38px; padding-left: 25px; grid-template-columns: 51px 80px 63px 107px 87px 59px 74px 59px 61px 151px 79px 32px 954px auto; }
.tabs span { margin-top: -2px; }
.tabs .home { width: 66px; height: 38px; margin: 0; padding-right: 1px; line-height: 36px; text-align: center; background: #f3f3f3; color: #217346; }
.ctx { letter-spacing: 0; }
.tell { letter-spacing: 0.03px; }

/* ribbon */
.ribbon { height: 115px; flex: none; display: flex; background: #f3f3f3; border-bottom: 1px solid #d2d2d2; padding-top: 5px; white-space: nowrap; }
.group { height: 105px; border-right: 1px solid #8c8c8c; display: flex; flex-direction: column; }
.g-clip { width: 205px; } .g-font { width: 288px; } .g-align { width: 349px; } .g-num { width: 194px; }
.g-styles { width: 239px; } .g-cells { width: 176px; } .g-edit { width: 249px; } .g-add { width: 77px; }
.gbody { height: 90px; flex: none; }
.glabel { height: 18px; flex: none; display: flex; align-items: center; font-size: 12.3px; letter-spacing: -0.05px; }
.glabel span { flex: 1; text-align: center; }
.glabel svg { margin-right: 3px; margin-left: -14px; }
.g-clip .glabel span, .g-font .glabel span { padding-right: 22px; }
.g-align .glabel span { padding-right: 22px; }
.g-num .glabel span { padding-right: 20px; }
.g-edit .glabel span { padding-right: 2px; }
.split, .bigs { display: grid; }
.split { grid-template-columns: 58px auto; padding-left: 7px; }
.g-styles .bigs { grid-template-columns: 110px 54px 72px; }
.g-cells .bigs { grid-template-columns: 70px 36px 68px; }
.g-edit .bigs { grid-template-columns: 125px 56px 56px; }
.g-add .bigs { grid-template-columns: 76px; }
.big { display: flex; flex-direction: column; align-items: center; padding-top: 3px; line-height: 20px; min-width: 0; }
.paste > svg:first-child { margin-left: 6px; }
.paste span, .paste .chev { margin-right: 1px; }
.big > .chev { margin-top: 6px; }
.small-col { margin-top: -1px; }
.g-clip .small-col { padding-left: 2px; }
.g-edit .small-col { padding-left: 15px; }
.sm { height: 29px; display: grid; grid-template-columns: 23px auto; justify-content: start; align-items: center; }
.sm span { margin-top: -3px; }
.sm.copy { grid-template-columns: 23px 47px auto; }
.sm.sum { grid-template-columns: 23px 74px auto; }
.rows { display: flex; flex-direction: column; gap: 8px; padding-top: 8px; }
.r1, .r2 { display: grid; grid-template-rows: 30px; align-items: center; height: 30px; }
.r1 svg, .r2 svg, .sort { overflow: visible; }
.r1 > span:last-child, .merge { margin-top: -2px; }
.g-font .r1 { padding-left: 10px; grid-template-columns: 146px 73px 29px 29px; }
.g-font .r2 { padding-left: 18px; grid-template-columns: 32px 28px 24px 19px 10px 27px 19px 9px 28px 21px 28px 20px; }
.g-align .r1 { padding-left: 15px; grid-template-columns: 30px 25px 32px 9px 25px 34px 12px 22px auto; }
.g-align .r2 { padding-left: 10px; grid-template-columns: 36px 31px 25px 9px 30px 29px 10px 24px 119px auto; }
.g-num .r1 { padding-left: 10px; }
.g-num .r2 { padding-left: 14px; grid-template-columns: 28px 23px 34px 22px 11px 29px auto; }
.topal { margin-top: -7px; }
.merge { letter-spacing: 0.04px; }
.combo { height: 30px; border: 1px solid #999; background: #fff; display: flex; align-items: center; justify-content: space-between; padding: 0 5px 0 2px; letter-spacing: 0.15px; }
.combo span { margin-top: -2px; }
.w145 { width: 144px; } .w63 { width: 62px; } .w175 { width: 174px; }
.tri { color: #666; }
.grow { display: flex; align-items: flex-start; font-size: 17px; line-height: 22px; color: #666; }
.grow .less { font-size: 15px; }
.r2 b, .r2 i, .r2 u { font-size: 15px; color: #444; font-weight: 700; margin-top: -1px; }
.r2 i { font-family: "Liberation Serif", serif; font-style: italic; font-size: 18px; }
.sep { width: 1px; height: 28px; background: #d0d0d0; }
.sep.tall { height: 70px; align-self: start; }
.ln { stroke: #666; stroke-width: 1.2; fill: none; }
.sel { width: 28px; height: 30px; border: 1px solid #8a8a8a; background: #c6c6c6; display: flex; align-items: center; justify-content: center; }
.ab { font: 600 11px "Open Sans", sans-serif; fill: #555; letter-spacing: 0; }
.dec { font: 600 9.5px "Open Sans", sans-serif; fill: #555; letter-spacing: -0.4px; }
.pct { font-size: 18px; color: #555; }
.fontcolor { width: 20px; border-bottom: 5px solid #f20000; font-size: 18px; font-weight: 600; line-height: 17px; color: #444; text-align: center; }
.az { font: 600 18px "Open Sans", sans-serif; }
.a { fill: #3f78bb; } .z { fill: #8f5bb5; }
.fold { flex: 1; padding: 97px 0 0 120px; }

/* workbook */
.work { height: 797px; flex: none; display: flex; }
.book { width: 1482px; flex: none; display: flex; flex-direction: column; }
.view { height: 768px; display: flex; }
.sheet { width: 1457px; display: flex; flex-direction: column; border-right: 1px solid #999; font-family: Lato, "Open Sans", sans-serif; font-size: 24.8px; letter-spacing: 0; color: #000; overflow: hidden; }
.cols { height: 35px; flex: none; display: grid; grid-template-columns: 51px 164px 155px repeat(9, 116px) 43px; background: #e6e6e6; border-bottom: 1px solid #999; font-size: 23.5px; }
.cols span { border-right: 1px solid #bcbcbc; text-align: center; line-height: 35px; }
.cols .corner { display: flex; justify-content: flex-end; padding: 5px 3px 0 0; }
.cols .on { background: #d2d2d2; color: #217346; box-shadow: inset 0 -2px #217346; }
.cells { height: 733px; position: relative; overflow: hidden; background:
  linear-gradient(#d0d0d0, #d0d0d0) 214px 0 / 1px 100% no-repeat,
  linear-gradient(#d0d0d0, #d0d0d0) 369px 0 / 1px 100% no-repeat,
  repeating-linear-gradient(90deg, transparent 0 115px, #d0d0d0 115px 116px) 370px 0 / 1087px 100% no-repeat, #fff; }
.row { height: 35px; display: grid; grid-template-columns: 51px 164px 154px; border-bottom: 1px solid #d0d0d0; line-height: 34px; white-space: nowrap; }
.row b { font-weight: 400; background: #e6e6e6; border-right: 1px solid #999; border-bottom: 1px solid #bcbcbc; height: 35px; text-align: center; font-size: 24px; }
.row span { background: #fff; padding-left: 4px; height: 35px; position: relative; }
.row.last span { height: 34px; }
.row.on b { background: #d2d2d2; color: #217346; }
.row.head span { background: #d9e1f2; font-weight: 700; font-size: 25px; letter-spacing: 0.15px; }
.filter { position: absolute; right: 1px; bottom: 2px; width: 20px; height: 20px; background: #fafafa; border: 1px solid #aaa; display: flex; align-items: center; justify-content: center; }
.row .num { display: flex; justify-content: space-between; padding: 0 10px 0 12px; letter-spacing: 0.15px; }
.row.on .num { background: #c6c6c6; }
.sliver { height: 10px; }
.sliver b { height: 12px; border-bottom: 1px solid #999; position: relative; }
.sliver b i { display: block; height: 8px; border-bottom: 1px solid #999; background:
  linear-gradient(#333, #333) 18px 0 / 5px 1px no-repeat, linear-gradient(#333, #333) 29px 0 / 6px 1px no-repeat; }
.selection { position: absolute; left: 49px; top: 34px; width: 322px; height: 37px; border: 2px solid #217346; }
.selection i { position: absolute; right: -3px; bottom: -3px; width: 6px; height: 6px; background: #217346; outline: 1px solid #fff; }
.chart { position: absolute; margin: 0; left: 485px; top: 68px; width: 801px; height: 524px; background: #c4cdd9; border: 2px solid #d5d9df; }
.chart figcaption { text-align: center; font-size: 30.9px; color: #595959; padding: 19px 2px 0 0; line-height: 36px; letter-spacing: -0.1px; }
.plot { margin-top: 33px; display: grid; grid-template-columns: 111px auto; grid-auto-rows: 81.2px; align-items: center; font-size: 22.1px; }
.plot span { text-align: right; padding: 0 22px 3px 0; }
.plot div { height: 100%; border-left: 1px solid #dadde2; display: flex; align-items: center; padding-bottom: 1px; }
.plot i { height: 29px; background: #4472c4; }
.vscroll { margin: 2px 0 0 3px; width: 20px; height: 767px; flex: none; display: flex; flex-direction: column; }
.btn { width: 20px; height: 20px; flex: none; border: 1px solid #999; background: #fff; display: flex; align-items: center; justify-content: center; color: #222; }
.thumb { border: 1px solid #999; background: #fff; }
.track { background: #f0f0f0; }
.vscroll .track { height: 58px; }
.vscroll .thumb { flex: 1; }
.sheets { height: 29px; border-top: 1px solid #999; display: grid; align-items: center; white-space: nowrap; padding-left: 28px; grid-template-columns: 28px 25px 22px 140px 152px 181px 209px 38px 26px 38px 18px 553px; font-size: 16.2px; letter-spacing: 0; width: 1458px; color: #444; }
.dots { font-weight: 700; font-size: 15.2px; color: #17593a; letter-spacing: 0.5px; line-height: 20px; padding-bottom: 1px; }
.st { border-left: 1px solid #999; height: 24px; line-height: 16px; padding-left: 14px; letter-spacing: 0.05px; }
.active { height: 28px; width: 209px; margin-top: -3px; background: #fff; color: #217346; font-weight: 700; line-height: 23px; padding-left: 11px; border-right: 1px solid #999; border-bottom: 3px solid #217346; letter-spacing: 0.2px; }
.cut { color: #666; padding-left: 13px; line-height: 18px; padding-bottom: 6px; overflow: hidden; width: 31px; }
.hscroll { display: flex; height: 20px; }
.hscroll .thumb { width: 471px; } .hscroll .track { flex: 1; }

/* pivot pane */
.pane { flex: 1; min-width: 0; border-left: 1px solid #bbb; padding: 0 15px; margin-top: 2px; }
.ptitle { display: grid; grid-template-columns: 333px 54px auto; align-items: center; height: 46px; padding-top: 8px; }
.ptitle h2 { margin: -1px 0 0 -1px; font-weight: 300; font-size: 26px; letter-spacing: 0; color: #333; white-space: nowrap; }
.ptitle svg { margin-top: -2px; }
.choose { margin-top: 8px; height: 36px; display: flex; justify-content: space-between; align-items: center; letter-spacing: 0; padding-left: 1px; }
.choose span { margin-top: -2px; }
.gear { width: 56px; height: 35px; border: 1px solid #999; background: #fff; display: flex; align-items: center; gap: 11px; padding: 0 0 1px 13px; color: #222; }
.gear { margin-top: -1px; }
.search { margin-top: 15px; height: 30px; border: 1px solid #c0c0c0; background: #fff; display: flex; justify-content: space-between; align-items: center; padding: 0 4px 2px 7px; color: #777; letter-spacing: -0.1px; }
.search span { margin-top: -1px; }
.list { margin-top: 20px; height: 242px; border: 1px solid #999; background: #fff; display: flex; justify-content: space-between; padding-right: 1px; }
.list ul { list-style: none; margin: 1px 0 0 4px; padding: 0; width: 375px; }
.list li { height: 27px; display: flex; line-height: 28px; margin-left: -1px; }
.list li::before { content: ""; width: 16px; height: 16px; margin: 1px 6px 0 0; border: 1px solid #777; background: #fff; }
.list li svg { margin: 6px 0 0 auto; color: #999; }
.lscroll { display: flex; flex-direction: column; width: 19px; padding: 1px 0 2px; }
.lscroll .btn { width: 19px; }
.lscroll .thumb { height: 98px; } .lscroll .track { flex: 1; }
.drag { margin: 18px 0 0 2px; border-top: 1px dotted #aaa; width: 410px; padding: 6px 0 0 3px; height: 46px; line-height: 20px; letter-spacing: 0.02px; }
.areas { margin-left: 4px; width: 405px; display: grid; grid-template-columns: 201px 204px; grid-template-rows: 133px 133px; }
.areas section:nth-child(even) { padding: 0 0 0 2px; border-left: 1px solid #b5b5b5; }
.areas section:nth-child(-n+2) { border-bottom: 1px solid #b5b5b5; }
.areas h3 { margin: 0; height: 26px; font-size: 14.3px; font-weight: 400; display: flex; align-items: center; gap: 9px; padding: 0 0 1px 5px; color: #333; letter-spacing: -0.1px; }
.areas section:nth-child(n+3) h3 { height: 34px; padding-top: 5px; }
.areas h3 svg { color: #999; margin-top: -3px; }
.drop { height: 99px; background: #fff; padding: 2px 1px; }
.areas section:nth-child(-n+2) .drop { margin-top: 1px; }
.areas section:nth-child(odd) .drop { width: 194px; }
.areas section:nth-child(even) .drop { width: 200px; }
.areas section:nth-child(even) h3 { gap: 8px; }
.field { height: 26px; border: 1px solid #aaa; display: flex; align-items: center; justify-content: space-between; padding: 0 11px 0 8px; background: #fff; color: #222; letter-spacing: 0; }
.defer { margin-top: 23px; height: 34px; display: flex; align-items: center; padding-left: 8px; letter-spacing: 0; }
.defer i { width: 16px; height: 16px; border: 1px solid #777; background: #fff; margin-right: 8px; }
.defer button { margin: -1px -1px 0 auto; width: 63px; height: 33px; border: 1px solid #d0d0d0; background: #fff; color: #c6c6c6; font: inherit; letter-spacing: inherit; padding: 0; }

/* status bar */
.status { height: 27px; flex: none; background: #f3f3f3; border-top: 1px solid #c6c6c6; display: grid; align-items: center; padding-left: 15px; grid-template-columns: 60px 22px 1120px 141px 68px 122px 66px 50px 41px 169px auto; font-size: 12.3px; letter-spacing: 0; white-space: nowrap; }
.acc { letter-spacing: 0.03px; }
.vsel { width: 50px; height: 26px; background: #c6c6c6; display: flex; align-items: center; justify-content: center; }
.zoom { padding-left: 4px; }

/* taskbar */
.taskbar { height: 60px; flex: none; background: #cfe7ee; border-top: 1px solid #a5b9bf; display: grid; grid-template-columns: 273px 47px 276px 824px 500px; align-items: center; }
.weather { position: relative; padding: 0 0 1px 25px; }
.weather span { position: absolute; left: 36px; top: -10px; width: 30px; height: 20px; border-radius: 10px; background: #f3fafc; color: #222; font-size: 13px; line-height: 20px; text-align: center; letter-spacing: -0.3px; }
.tsearch { width: 273px; height: 40px; margin-top: -1px; border-radius: 20px; background: #f0f8fa; border: 1px solid #c0d6dd; display: grid; grid-template-columns: 31px 168px auto; align-items: center; padding-left: 13px; font-size: 16.4px; letter-spacing: 0; color: #555; }
.apps { display: grid; grid-template-columns: repeat(15, 55px); height: 59px; }
.apps span { display: flex; align-items: center; justify-content: center; position: relative; padding-bottom: 1px; }
.run::after { content: ""; position: absolute; bottom: 5px; width: 8px; height: 4px; border-radius: 2px; background: #7b8b92; }
.current::before { content: ""; position: absolute; left: 4px; top: 5px; width: 46px; height: 48px; border-radius: 5px; background: #e6f3f7; }
.current svg { position: relative; }
.current::after { width: 20px; background: #1e7b8c; }
.tk { font: 700 14px "Open Sans", sans-serif; letter-spacing: 0; }
.badge { font: 600 14px "Open Sans", sans-serif; fill: #fff; }
.ub { font: 600 9.5px "Open Sans", sans-serif; fill: #ffe; letter-spacing: 0; }
.pre { font: 800 9px "Open Sans", sans-serif; fill: #222; letter-spacing: 0; }
.tray { display: grid; align-items: center; padding-left: 86px; grid-template-columns: 37px 37px 58px 30px 30px 28px 100px 39px auto; color: #222; line-height: 22px; padding-bottom: 1px; }
.lang { text-align: center; width: 42px; letter-spacing: 0.15px; margin-top: 2px; }
.clock { text-align: right; width: 90px; letter-spacing: 0.2px; }
```
